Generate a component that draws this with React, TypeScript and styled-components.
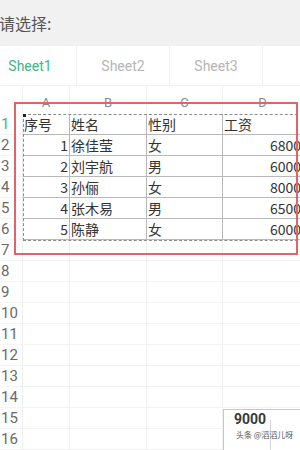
import styled, { createGlobalStyle } from "styled-components";

const GlobalStyle = createGlobalStyle`
  html, body {
    margin: 0;
    padding: 0;
    background: #ffffff;
  }
  body {
    width: 300px;
    height: 450px;
    overflow: hidden;
    font-family: Roboto, "Noto Sans CJK SC", sans-serif;
  }
`;

const rows = [
  { no: "序号", name: "姓名", sex: "性别", pay: "工资", head: true },
  { no: "1", name: "徐佳莹", sex: "女", pay: "6800" },
  { no: "2", name: "刘宇航", sex: "男", pay: "6000" },
  { no: "3", name: "孙俪", sex: "女", pay: "8000" },
  { no: "4", name: "张木易", sex: "男", pay: "6500" },
  { no: "5", name: "陈静", sex: "女", pay: "6000" },
];

const COLS = "23px 47px 77px 76px 80px";

export default function App() {
  const empty = Array.from({ length: 10 }, (_, i) => i + 7);

  return (
    <Page>
      <GlobalStyle />
      <Header>请选择:</Header>
      <Tabs>
        <Tab $active>Sheet1</Tab>
        <Tab>Sheet2</Tab>
        <Tab>Sheet3</Tab>
        <Tab $blank />
      </Tabs>
      <Sheet>
        <Grid>
          <ColHead />
          <ColHead>A</ColHead>
          <ColHead>B</ColHead>
          <ColHead>C</ColHead>
          <ColHead>D</ColHead>
          {rows.map((r, i) => (
            <Row key={i}>
              <RowNum $active={i === 0}>{i + 1}</RowNum>
              <Cell $data $right={!r.head}>{r.no}</Cell>
              <Cell $data>{r.name}</Cell>
              <Cell $data>{r.sex}</Cell>
              <Cell $data $right={!r.head}>{r.pay}</Cell>
            </Row>
          ))}
          {empty.map((n) => (
            <Row key={n}>
              <RowNum>{n}</RowNum>
              <Cell />
              <Cell />
              <Cell />
              <Cell />
            </Row>
          ))}
        </Grid>
        <Selection>
          <Handle />
        </Selection>
        <RedFrame />
        <Popup>
          <PopupValue>9000</PopupValue>
          <PopupLine />
        </Popup>
        <Watermark>头条 @滔滔儿呀</Watermark>
      </Sheet>
    </Page>
  );
}

const Page = styled.div`
  width: 300px;
  height: 450px;
  overflow: hidden;
  background: #ffffff;
`;

const Header = styled.div`
  height: 46px;
  background: #f1f1f1;
  display: flex;
  align-items: center;
  margin-left: -1px;
  font-family: "Noto Sans CJK SC", sans-serif;
  font-size: 16px;
  color: #555555;
`;

const Tabs = styled.div`
  height: 39px;
  display: flex;
  margin-left: -16px;
  background: #ffffff;
  border-bottom: 1px solid #f3f3f3;
`;

const Tab = styled.div<{ $active?: boolean; $blank?: boolean }>`
  flex: ${(p) => (p.$blank ? "1" : "0 0 92px")};
  display: flex;
  align-items: center;
  justify-content: center;
  border-right: ${(p) => (p.$blank ? "none" : "1px solid #f0f0f0")};
  font-size: 14px;
  color: ${(p) => (p.$active ? "#3db489" : "#b5b5b5")};
`;

const Sheet = styled.div`
  position: relative;
  width: 300px;
  overflow: hidden;
`;

const Grid = styled.div`
  display: grid;
  grid-template-columns: ${COLS};
  width: 303px;
`;

const Row = styled.div`
  display: contents;
`;

const ColHead = styled.div`
  height: 28px;
  display: flex;
  align-items: center;
  justify-content: center;
  padding-top: 4px;
  box-sizing: border-box;
  border-right: 1px solid #f0f0f0;
  font-size: 13px;
  color: #8a8a8a;
`;

const RowNum = styled.div<{ $active?: boolean }>`
  height: 21px;
  display: flex;
  align-items: center;
  padding-left: 1px;
  box-sizing: border-box;
  border-right: 1px solid #eeeeee;
  border-bottom: 1px solid #f4f4f4;
  font-size: 15px;
  color: ${(p) => (p.$active ? "#3db489" : "#6a6a6a")};
`;

const Cell = styled.div<{ $data?: boolean; $right?: boolean }>`
  height: 21px;
  display: flex;
  align-items: center;
  justify-content: ${(p) => (p.$right ? "flex-end" : "flex-start")};
  padding: 0 1px;
  box-sizing: border-box;
  border-right: 1px solid ${(p) => (p.$data ? "#b8b8b8" : "#efefef")};
  border-bottom: 1px solid ${(p) => (p.$data ? "#b8b8b8" : "#f2f2f2")};
  font-family: "Noto Sans CJK SC", sans-serif;
  font-size: 14px;
  color: #333333;
  white-space: nowrap;
  overflow: hidden;
`;

const Selection = styled.div`
  position: absolute;
  left: 23px;
  top: 28px;
  width: 290px;
  height: 127px;
  border: 1px dashed #8c8c8c;
  box-sizing: border-box;
  pointer-events: none;
`;

const Handle = styled.div`
  position: absolute;
  left: -1px;
  top: -1px;
  width: 3px;
  height: 3px;
  background: #222222;
`;

const RedFrame = styled.div`
  position: absolute;
  left: 14px;
  top: 16px;
  width: 284px;
  height: 153px;
  border: 2px solid #e0646a;
  box-sizing: border-box;
  pointer-events: none;
`;

const Popup = styled.div`
  position: absolute;
  left: 223px;
  top: 323px;
  width: 90px;
  height: 60px;
  background: #ffffff;
  border: 1px solid #c8c8c8;
  box-sizing: border-box;
`;

const PopupValue = styled.div`
  position: absolute;
  left: 10px;
  top: 1px;
  font-size: 14px;
  font-weight: 700;
  color: #3a3a3a;
`;

const PopupLine = styled.div`
  position: absolute;
  left: 46px;
  top: 10px;
  width: 1px;
  height: 50px;
  background: #d6d6d6;
`;

const Watermark = styled.div`
  position: absolute;
  left: 236px;
  top: 343px;
  font-family: "Noto Sans CJK SC", sans-serif;
  font-size: 8px;
  color: #555555;
  white-space: nowrap;
`;
